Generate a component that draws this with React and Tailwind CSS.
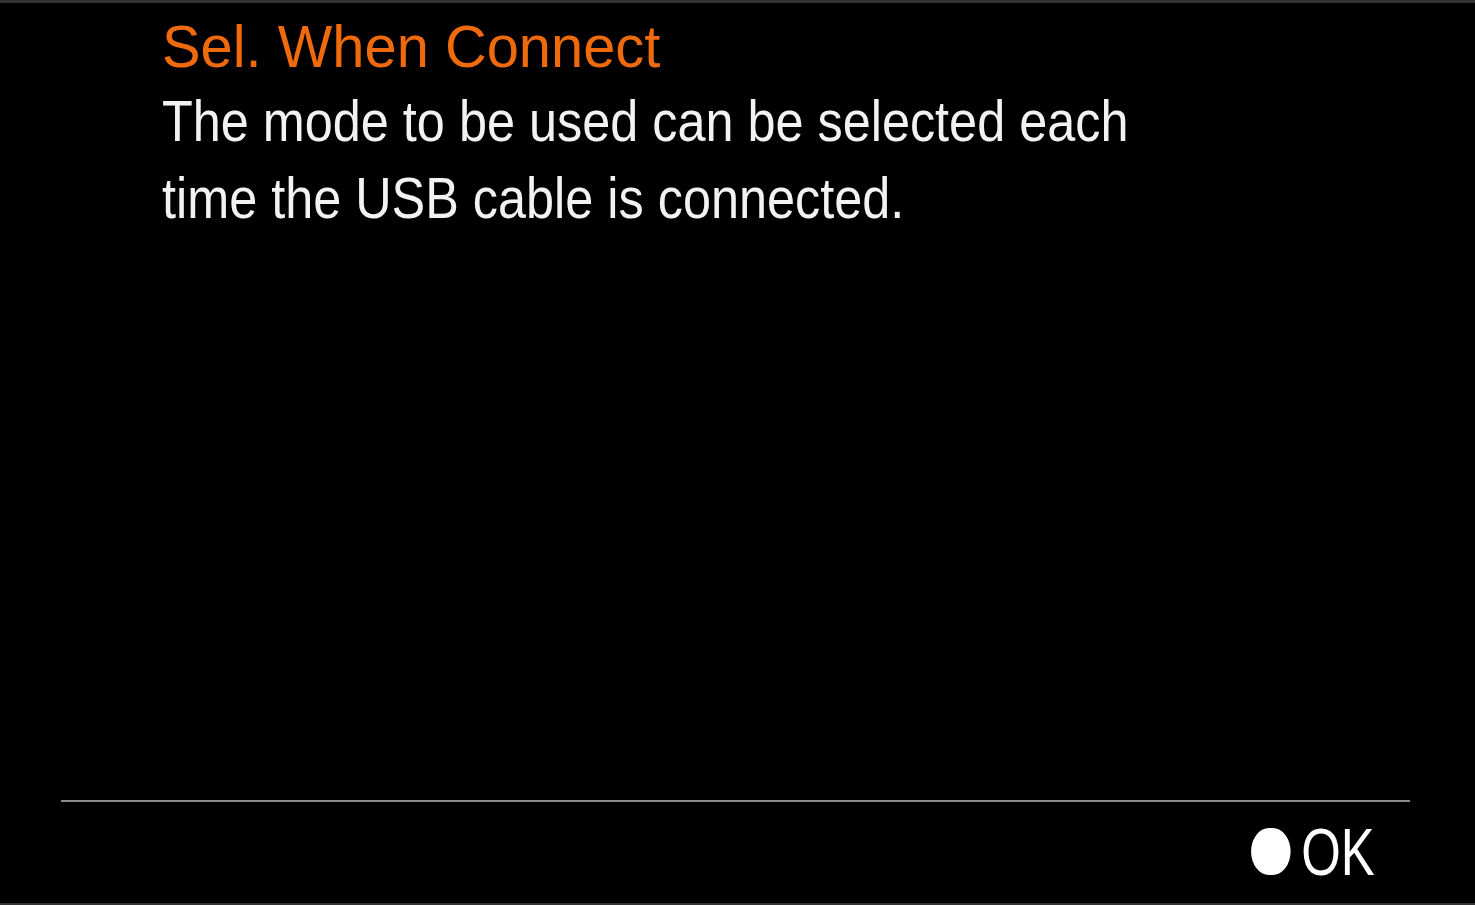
export default function App() {
  return (
    <div
      className="w-[1475px] h-[905px] bg-black border-t-[3px] border-b-[2px] border-[#333333] flex flex-col overflow-hidden"
      style={{ fontFamily: '"Liberation Sans", Arial, sans-serif' }}
    >
      <div className="pl-[162px] pt-[8px]">
        <h1 className="text-[#ee6a0c] text-[60px] leading-[72px] scale-x-[0.964] origin-left whitespace-nowrap">
          Sel. When Connect
        </h1>
        <p className="text-[#f2f2f2] text-[57px] leading-[77px] w-[1150px] scale-x-[0.884] origin-left">
          The mode to be used can be selected each time the USB cable is connected.
        </p>
      </div>
      <div className="flex-1" />
      <div className="ml-[61px] h-[2px] bg-[#8a8a8a] w-[1349px]" />
      <div className="flex justify-end items-center pr-[100px] h-[101px] pb-[3px]">
        <div className="flex items-center gap-[14px] scale-x-[0.76] origin-right">
          <span className="w-[52px] h-[47px] rounded-full bg-white" />
          <span className="text-white text-[67px] leading-none">OK</span>
        </div>
      </div>
    </div>
  );
}
